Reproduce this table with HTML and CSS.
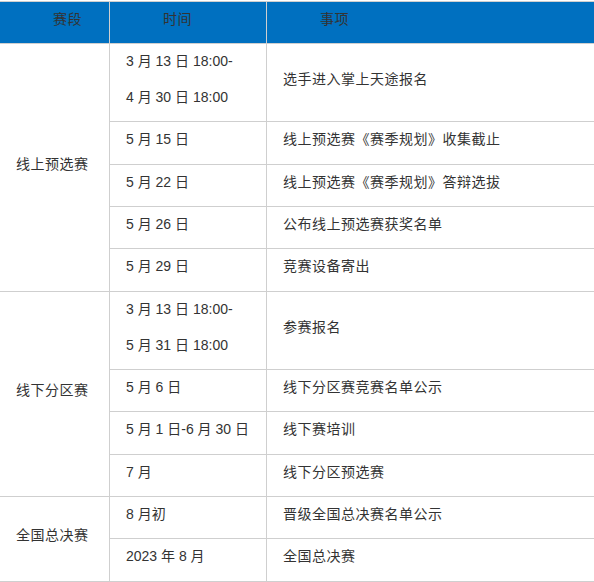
FILE: index.html
```html
<!DOCTYPE html>
<html lang="zh-CN">
<head>
<meta charset="utf-8">
<title>赛程</title>
<link rel="stylesheet" href="styles.css">
</head>
<body>
<div class="wrap">
<table class="schedule">
  <thead>
    <tr>
      <th class="c1">赛段</th>
      <th class="c2">时间</th>
      <th class="c3">事项</th>
    </tr>
  </thead>
  <tbody>
    <tr>
      <td class="stage" rowspan="5">线上预选赛</td>
      <td class="dbl"><div class="l1">3 月 13 日 18:00-</div><div>4 月 30 日 18:00</div></td>
      <td class="item">选手进入掌上天途报名</td>
    </tr>
    <tr><td>5 月 15 日</td><td class="item">线上预选赛《赛季规划》收集截止</td></tr>
    <tr><td>5 月 22 日</td><td class="item">线上预选赛《赛季规划》答辩选拔</td></tr>
    <tr><td>5 月 26 日</td><td class="item">公布线上预选赛获奖名单</td></tr>
    <tr><td>5 月 29 日</td><td class="item">竞赛设备寄出</td></tr>
    <tr>
      <td class="stage" rowspan="4">线下分区赛</td>
      <td class="dbl"><div class="l1">3 月 13 日 18:00-</div><div>5 月 31 日 18:00</div></td>
      <td class="item">参赛报名</td>
    </tr>
    <tr><td>5 月 6 日</td><td class="item">线下分区赛竞赛名单公示</td></tr>
    <tr><td>5 月 1 日-6 月 30 日</td><td class="item">线下赛培训</td></tr>
    <tr><td>7 月</td><td class="item">线下分区预选赛</td></tr>
    <tr>
      <td class="stage" rowspan="2">全国总决赛</td>
      <td>8 月初</td>
      <td class="item">晋级全国总决赛名单公示</td>
    </tr>
    <tr><td>2023 年 8 月</td><td class="item">全国总决赛</td></tr>
  </tbody>
</table>
</div>
</body>
</html>
```
FILE: styles.css
```css
html, body {
  margin: 0;
  padding: 0;
  overflow: hidden;
  background: #ffffff;
}

.wrap {
  width: 594px;
  overflow: hidden;
  padding-top: 1px;
}

.schedule {
  border-collapse: separate;
  border-spacing: 0;
  border-top: 1px solid #cfcfcf;
  width: 640px;
  table-layout: fixed;
  font-family: "Liberation Sans", Arial, "Noto Sans CJK SC", sans-serif;
  font-size: 14px;
  color: #333333;
}

.schedule th,
.schedule td {
  box-sizing: border-box;
  border-right: 1px solid #cfcfcf;
  border-bottom: 1px solid #cfcfcf;
  padding: 5px 8px 12.33px 16px;
  line-height: 24px;
  text-align: left;
  vertical-align: middle;
  white-space: nowrap;
}

.schedule th {
  background: #0070c0;
  font-weight: normal;
  color: #333333;
  padding: 5px 8px 12px 53px;
  letter-spacing: 0.5px;
}

.schedule .stage,
.schedule .item {
  letter-spacing: 0.5px;
}

.schedule .c1 { width: 110px; }
.schedule .c2 { width: 157px; }
.schedule .c3 { width: 373px; }

.schedule .l1 {
  margin-bottom: 12px;
}
```
